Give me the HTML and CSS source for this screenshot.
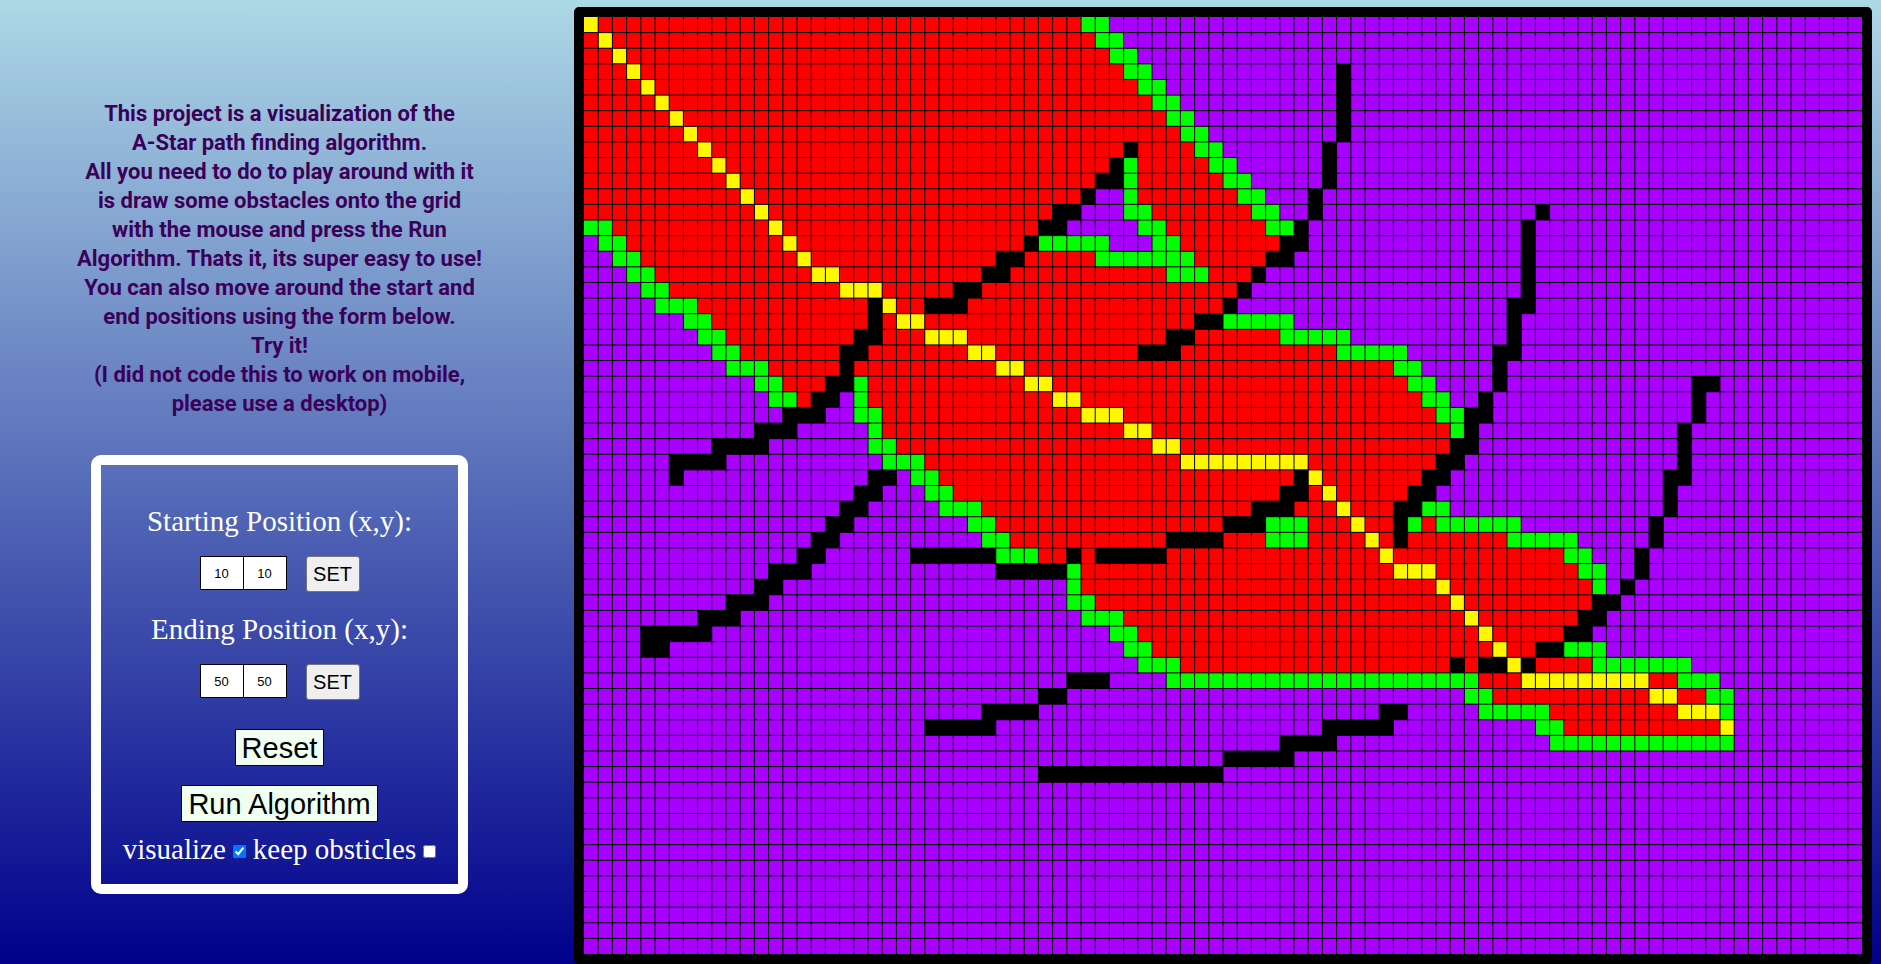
FILE: index.html
```html
<!DOCTYPE html>
<html lang="en">
<head>
<meta charset="utf-8">
<title>A-Star Path Finding</title>
<link rel="stylesheet" href="styles.css">
</head>
<body>
<div class="page">
  <aside class="sidebar">
    <p class="intro">This project is a visualization of the<br>A-Star path finding algorithm.<br>All you need to do to play around with it<br>is draw some obstacles onto the grid<br>with the mouse and press the Run<br>Algorithm. Thats it, its super easy to use!<br>You can also move around the start and<br>end positions using the form below.<br>Try it!<br>(I did not code this to work on mobile,<br>please use a desktop)</p>
    <form class="controls">
      <label class="heading" for="start-x">Starting Position (x,y):</label>
      <div class="position">
        <input class="coord" id="start-x" type="text" value="10" aria-label="Start x"><input class="coord" type="text" value="10" aria-label="Start y">
        <button class="set" type="button">SET</button>
      </div>
      <label class="heading" for="end-x">Ending Position (x,y):</label>
      <div class="position">
        <input class="coord" id="end-x" type="text" value="50" aria-label="End x"><input class="coord" type="text" value="50" aria-label="End y">
        <button class="set" type="button">SET</button>
      </div>
      <button class="action" type="button">Reset</button>
      <button class="action" type="button">Run Algorithm</button>
      <div class="options">
        <label for="visualize">visualize</label>
        <input class="tick" id="visualize" type="checkbox" checked>
        <label for="keep">keep obsticles</label>
        <input class="tick" id="keep" type="checkbox">
      </div>
    </form>
  </aside>
  <main class="board">
    <canvas class="grid" id="grid"></canvas>
  </main>
</div>
<script src="grid.js"></script>
</body>
</html>
```

FILE: styles.css
```css
* {
  box-sizing: border-box;
}

body {
  margin: 0;
  font-family: "Liberation Serif", "Times New Roman", serif;
  color: white;
}

.page {
  display: flex;
  min-height: 100vh;
  padding: 7px 9px 0 0;
  background: linear-gradient(lightblue, darkblue);
}

.sidebar {
  flex: none;
  display: flex;
  flex-direction: column;
  align-items: center;
  width: 574px;
  padding: 92px 15px 0 0;
}

.intro {
  margin: 0 0 37px;
  color: #3b0058;
  font: bold 22px/29px Roboto, "Liberation Sans", Arial, sans-serif;
  text-align: center;
  white-space: nowrap;
}

.controls {
  display: flex;
  flex-direction: column;
  align-items: center;
  width: 377px;
  padding: 38px 0 17px;
  border: 10px solid white;
  border-radius: 10px;
  font-size: 29px;
  line-height: 36px;
}

.position {
  display: flex;
  align-items: flex-start;
  margin: 17px 0 19px;
}

.coord {
  width: 44px;
  height: 34px;
  padding: 0;
  border: 1px solid black;
  border-radius: 0;
  background: white;
  color: black;
  font: 13px "Liberation Sans", Arial, sans-serif;
  text-align: center;
}

.coord + .coord {
  margin-left: -1px;
}

.set {
  width: 54px;
  height: 36px;
  margin-left: 19px;
  padding: 0;
  border: 1px solid #767676;
  border-radius: 3px;
  background: #efefef;
  color: black;
  font: 20px "Liberation Sans", Arial, sans-serif;
}

.action {
  height: 37px;
  margin: 10px 0 9px;
  padding: 0 6px;
  border: 1px solid black;
  background: honeydew;
  color: black;
  font: 29px/34px "Liberation Sans", Arial, sans-serif;
}

.options {
  display: flex;
  align-items: center;
  gap: 7px;
}

.tick {
  width: 13px;
  height: 13px;
  margin: 5px 0 0;
}

.board {
  flex: 1;
  display: flex;
  min-width: 0;
  height: calc(100vh - 7px);
  border: 10px solid black;
  border-radius: 5px;
  background: black;
}

.grid {
  flex: 1;
  min-width: 0;
  height: 100%;
}
```

FILE: grid.js
```js
const COLS = 90;
const ROWS = 60;

const COLORS = {
  P: "#aa00ff",
  R: "#ff0000",
  G: "#00ff00",
  Y: "#fff700",
  K: "#000000"
};

// Each row lists the cell state and the column at which it begins.
const rows = [
  "Y0 R1 G35 P37",
  "R0 Y1 R2 G36 P38",
  "R0 Y2 R3 G37 P39",
  "R0 Y3 R4 G38 P40 K53 P54",
  "R0 Y4 R5 G39 P41 K53 P54",
  "R0 Y5 R6 G40 P42 K53 P54",
  "R0 Y6 R7 G41 P43 K53 P54",
  "R0 Y7 R8 G42 P44 K53 P54",
  "R0 Y8 R9 K38 R39 G43 P45 K52 P53",
  "R0 Y9 R10 K37 G38 R39 G44 P46 K52 P53",
  "R0 Y10 R11 K36 G38 R39 G45 P47 K52 P53",
  "R0 Y11 R12 K35 P36 G38 R39 G46 P48 K51 P52",
  "R0 Y12 R13 K33 P35 G38 R40 G47 P49 K51 P52 K67 P68",
  "G0 R2 Y13 R14 K32 P34 G39 R41 G48 K50 P51 K66 P67",
  "P0 G1 R3 Y14 R15 K31 G32 P37 G40 R42 K49 P51 K66 P67",
  "P0 G2 R4 Y15 R16 K29 R31 G36 R43 K48 P50 K66 P67",
  "P0 G3 R5 Y16 R18 K28 R30 G41 R44 K47 P48 K66 P67",
  "P0 G4 R6 Y18 R21 K26 R28 K46 P47 K66 P67",
  "P0 G5 R8 K20 Y21 R22 K24 R27 K45 P46 K65 P67",
  "P0 G7 R9 K20 R21 Y22 R24 K43 G45 P50 K65 P66",
  "P0 G8 R10 K19 R21 Y24 R27 K41 R43 G49 P54 K65 P66",
  "P0 G9 R11 K18 R20 Y27 R29 K39 R42 G53 P58 K64 P66",
  "P0 G10 R13 K18 R19 Y29 R31 G57 P59 K64 P65",
  "P0 G12 R14 K17 G19 R20 Y31 R33 G58 P60 K64 P65 K78 P80",
  "P0 G13 R15 K16 P18 G19 R20 Y33 R35 G59 P61 K63 P64 K78 P79",
  "P0 K14 P17 G19 R21 Y35 R38 G60 K62 P64 K78 P79",
  "P0 K12 P15 G20 R21 Y38 R40 G61 K62 P63 K77 P78",
  "P0 K9 P13 G20 R22 Y40 R42 K61 P63 K77 P78",
  "P0 K6 P10 G21 R24 Y42 R51 K60 P62 K77 P78",
  "P0 K6 P7 K20 P22 G23 R25 K50 Y51 R52 K59 P61 K76 P78",
  "P0 K19 P21 G24 R26 K49 R51 Y52 R53 K58 P60 K76 P77",
  "P0 K18 P20 G25 R28 K47 R50 Y53 R54 K57 G59 P61 K76 P77",
  "P0 K17 P19 G27 R29 K45 G48 R51 Y54 R55 K57 G58 R59 G60 P66 K75 P76",
  "P0 K16 P18 G28 R30 K41 R45 G48 R51 Y55 R56 K57 R58 G65 P70 K75 P76",
  "P0 K15 P17 K23 G29 R32 K34 R35 K36 R41 Y56 R57 G69 P71 K74 P75",
  "P0 K13 P16 K29 G34 R35 Y57 R60 G70 P72 K74 P75",
  "P0 K12 P14 G34 R35 Y60 R61 G71 P72 K73 P74",
  "P0 K10 P13 G34 R36 Y61 R62 K71 P73",
  "P0 K8 P11 G35 R38 Y62 R63 K70 P72",
  "P0 K4 P9 G37 R39 Y63 R64 K69 P71",
  "P0 K4 P6 G38 R40 Y64 R65 K67 G69 P72",
  "P0 G39 R42 K61 R62 K63 Y65 K66 R67 G71 P78",
  "P0 K34 P37 G41 R63 Y66 R75 G77 P80",
  "P0 K32 P34 G62 R64 Y75 R77 G79 P81",
  "P0 K28 P32 K56 P58 G63 R68 Y77 G80 P81",
  "P0 K24 P29 K52 P57 G67 R69 Y80 P81",
  "P0 K49 P53 G68 P81",
  "P0 K45 P50",
  "P0 K32 P45"
];

function draw() {
  const canvas = document.getElementById("grid");
  const width = canvas.clientWidth;
  const height = canvas.clientHeight;
  canvas.width = width;
  canvas.height = height;
  const ctx = canvas.getContext("2d");
  const w = width / COLS;
  const h = height / ROWS;

  for (let y = 0; y < ROWS; y++) {
    const runs = (rows[y] || "P0").split(" ");
    runs.forEach((run, i) => {
      const from = Number(run.slice(1));
      const to = i + 1 < runs.length ? Number(runs[i + 1].slice(1)) : COLS;
      ctx.fillStyle = COLORS[run[0]];
      ctx.fillRect(from * w, y * h, (to - from) * w, h);
    });
  }

  ctx.strokeStyle = "black";
  ctx.lineWidth = 1;
  ctx.beginPath();
  for (let x = 1; x < COLS; x++) {
    ctx.moveTo(x * w, 0);
    ctx.lineTo(x * w, height);
  }
  for (let y = 1; y < ROWS; y++) {
    ctx.moveTo(0, y * h);
    ctx.lineTo(width, y * h);
  }
  ctx.stroke();
}

draw();
window.addEventListener("resize", draw);
```
